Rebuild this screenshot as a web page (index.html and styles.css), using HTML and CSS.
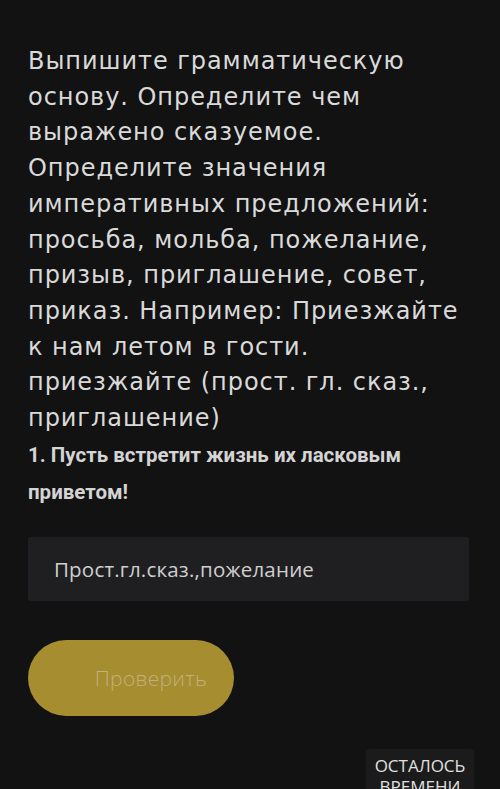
FILE: index.html
```html
<!DOCTYPE html>
<html lang="ru">
<head>
<meta charset="utf-8">
<title>Задание</title>
<link rel="stylesheet" href="styles.css">
</head>
<body>
<main class="page">
  <section class="task">
    <p class="question">Выпишите грамматическую<br>основу. Определите чем<br>выражено сказуемое.<br>Определите значения<br>императивных предложений:<br>просьба, мольба, пожелание,<br>призыв, приглашение, совет,<br>приказ. Например: Приезжайте<br>к нам летом в гости.<br>приезжайте (прост. гл. сказ.,<br>приглашение)</p>
    <p class="sentence">1. Пусть встретит жизнь их ласковым приветом!</p>
  </section>
  <div class="answer">Прост.гл.сказ.,пожелание</div>
  <button class="check" type="button">Проверить</button>
  <div class="timer-row">
    <div class="timer">ОСТАЛОСЬ<br>ВРЕМЕНИ</div>
  </div>
</main>
</body>
</html>
```
FILE: styles.css
```css
html, body {
  margin: 0;
  padding: 0;
  background: #121212;
  height: 100%;
  overflow: hidden;
}
.page {
  width: 446px;
  padding: 44px 0 0 28px;
  font-family: "Open Sans", "Liberation Sans", sans-serif;
  color: #d9d9d9;
}
.task p {
  margin: 0;
}
.question {
  font-family: "DejaVu Sans", "Open Sans", sans-serif;
  font-size: 24px;
  line-height: 35.7px;
  letter-spacing: 0.95px;
  white-space: nowrap;
  color: #dadada;
}
.sentence {
  width: 436px;
  font-family: "Roboto", "Liberation Sans", sans-serif;
  font-size: 20.5px;
  font-weight: 700;
  line-height: 37px;
  color: #d4d4d4;
}
.answer {
  margin-top: 26px;
  height: 64px;
  box-sizing: border-box;
  width: 441px;
  background: #1f1f22;
  border-radius: 3px;
  padding-left: 26px;
  display: flex;
  align-items: center;
  font-size: 20.5px;
  letter-spacing: 0.2px;
  color: #cfcfcf;
}
.check {
  display: block;
  margin-top: 39px;
  width: 206px;
  height: 76px;
  border: none;
  border-radius: 38px;
  background: #a68d30;
  color: #c2b07d;
  font-family: "Open Sans", "Liberation Sans", sans-serif;
  font-size: 21px;
  font-weight: 300;
  letter-spacing: 0.3px;
  padding: 0 0 0 40px;
  cursor: pointer;
}
.timer-row {
  display: flex;
  justify-content: flex-end;
  margin-top: 33px;
}
.timer {
  background: #1b1b1b;
  border-radius: 4px;
  padding: 6px 8px;
  text-align: center;
  font-size: 17px;
  line-height: 21px;
  color: #e0e0e0;
  width: 92px;
}
```
